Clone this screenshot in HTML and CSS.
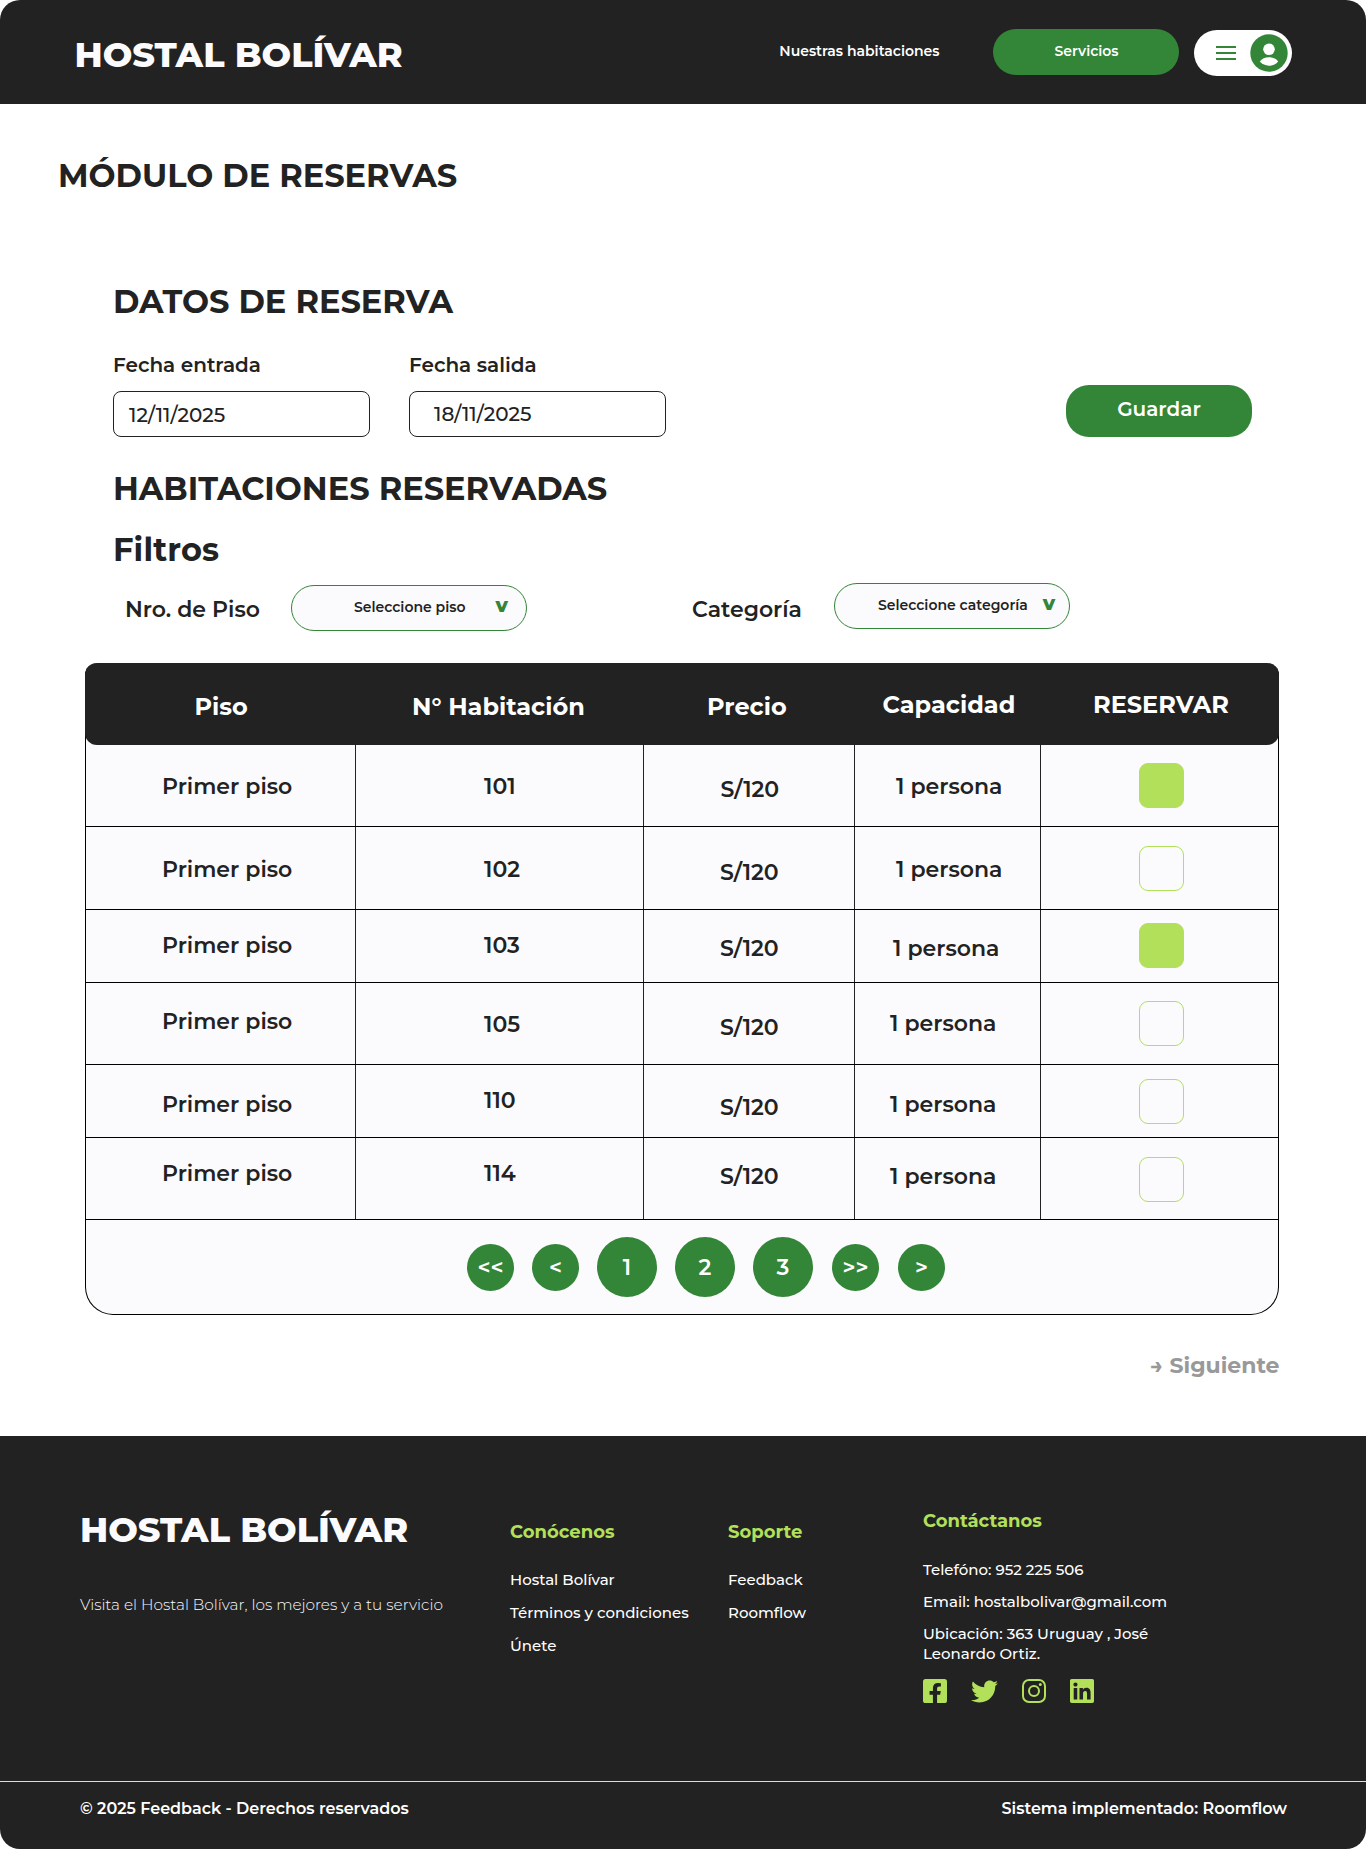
FILE: index.html
```html
<!DOCTYPE html>
<html lang="es">
<head>
<meta charset="utf-8">
<title>Hostal Bolívar - Módulo de reservas</title>
<link rel="stylesheet" href="styles.css">
</head>
<body>
<div class="page">
  <header class="topbar">
    <div class="brand">HOSTAL BOLÍVAR</div>
    <nav class="nav">
      <a class="nav-link">Nuestras habitaciones</a>
      <a class="nav-button">Servicios</a>
      <div class="user-menu">
        <svg class="burger" width="20" height="14" viewBox="0 0 20 14" fill="#338537"><path d="M0 0h20v2H0zM0 6h20v2H0zM0 12h20v2H0z"/></svg>
        <svg width="38" height="38" viewBox="0 0 38 38"><circle cx="19" cy="19" r="18.7" fill="#338537"/><circle cx="19" cy="15.3" r="5.8" fill="#fff"/><path d="M9.8 27.6c1.8-3 5.4-4.4 9.2-4.4s7.400 1.400 9.200 4.400c-2.300 2.800-5.600 4.100-9.200 4.100s-6.900-1.300-9.200-4.100z" fill="#fff"/></svg>
      </div>
    </nav>
  </header>

  <main>
    <h1 class="title">MÓDULO DE RESERVAS</h1>
    <section class="booking">
      <h2>DATOS DE RESERVA</h2>
      <div class="dates">
        <div class="field">
          <label>Fecha entrada</label>
          <div class="input input-in">12/11/2025</div>
        </div>
        <div class="field">
          <label>Fecha salida</label>
          <div class="input input-out">18/11/2025</div>
        </div>
        <button class="save">Guardar</button>
      </div>
      <h2 class="rooms-title">HABITACIONES RESERVADAS</h2>
      <h2 class="filters-title">Filtros</h2>
      <div class="filters">
        <span class="filter-label">Nro. de Piso</span>
        <div class="select select-floor"><span>Seleccione piso</span><b>v</b></div>
        <span class="filter-label filter-category">Categoría</span>
        <div class="select select-category"><span>Seleccione categoría</span><b>v</b></div>
      </div>
    </section>

    <section class="table">
      <div class="row head">
        <div>Piso</div><div>N° Habitación</div><div>Precio</div><div>Capacidad</div><div>RESERVAR</div>
      </div>
      <div class="row r1"><div>Primer piso</div><div>101</div><div>S/120</div><div>1 persona</div><div><i class="check on"></i></div></div>
      <div class="row r2"><div>Primer piso</div><div>102</div><div>S/120</div><div>1 persona</div><div><i class="check"></i></div></div>
      <div class="row r3"><div>Primer piso</div><div>103</div><div>S/120</div><div>1 persona</div><div><i class="check on"></i></div></div>
      <div class="row r4"><div>Primer piso</div><div>105</div><div>S/120</div><div>1 persona</div><div><i class="check"></i></div></div>
      <div class="row r5"><div>Primer piso</div><div>110</div><div>S/120</div><div>1 persona</div><div><i class="check"></i></div></div>
      <div class="row r6"><div>Primer piso</div><div>114</div><div>S/120</div><div>1 persona</div><div><i class="check"></i></div></div>
      <div class="pager">
        <a class="small">&lt;&lt;</a><a class="small">&lt;</a><a>1</a><a>2</a><a>3</a><a class="small forward">&gt;&gt;</a><a class="small forward">&gt;</a>
      </div>
    </section>
    <a class="next">→ Siguiente</a>
  </main>

  <footer>
    <div class="footer-main">
      <div class="about">
        <div class="brand">HOSTAL BOLÍVAR</div>
        <p class="tagline">Visita el Hostal Bolívar, los mejores y a tu servicio</p>
      </div>
      <div class="links">
        <h3>Conócenos</h3>
        <a>Hostal Bolívar</a><a>Términos y condiciones</a><a>Únete</a>
      </div>
      <div class="links">
        <h3>Soporte</h3>
        <a>Feedback</a><a>Roomflow</a>
      </div>
      <div class="contact">
        <h3>Contáctanos</h3>
        <p>Telefóno: 952 225 506</p>
        <p>Email: hostalbolivar@gmail.com</p>
        <p>Ubicación: 363 Uruguay , José<br>Leonardo Ortiz.</p>
        <div class="social">
          <svg width="24" height="24" viewBox="0 32 448 448" fill="#b2e05b"><path d="M400 32H48A48 48 0 0 0 0 80v352a48 48 0 0 0 48 48h137.250V327.690h-63V256h63v-54.640c0-62.150 37-96.480 93.670-96.480 27.140 0 55.520 4.840 55.520 4.840v61h-31.270c-30.810 0-40.420 19.120-40.420 38.730V256h68.780l-11 71.690h-57.780V480H400a48 48 0 0 0 48-48V80a48 48 0 0 0-48-48z"/></svg>
          <svg width="27" height="27" viewBox="0 0 512 512" fill="#b2e05b"><path d="M459.370 151.716c.325 4.548.325 9.097.325 13.645 0 138.720-105.583 298.558-298.558 298.558-59.452 0-114.680-17.219-161.137-47.106 8.447.974 16.568 1.299 25.340 1.299 49.055 0 94.213-16.568 130.274-44.832-46.132-.975-84.792-31.188-98.112-72.772 6.498.974 12.995 1.624 19.818 1.624 9.421 0 18.843-1.300 27.614-3.573-48.081-9.747-84.143-51.980-84.143-102.985v-1.299c13.969 7.797 30.214 12.670 47.431 13.319-28.264-18.843-46.781-51.005-46.781-87.391 0-19.492 5.197-37.360 14.294-52.954 51.655 63.675 129.300 105.258 216.365 109.807-1.624-7.797-2.599-15.918-2.599-24.040 0-57.828 46.782-104.934 104.934-104.934 30.213 0 57.502 12.670 76.670 33.137 23.715-4.548 46.456-13.320 66.599-25.340-7.798 24.366-24.366 44.833-46.132 57.827 21.117-2.273 41.584-8.122 60.426-16.243-14.292 20.791-32.161 39.308-52.628 54.253z"/></svg>
          <svg width="24" height="24" viewBox="0 0 24 24" fill="none" stroke="#b2e05b" stroke-width="2"><rect x="1" y="1" width="22" height="22" rx="6"/><circle cx="12" cy="12" r="5"/><circle cx="18.300" cy="5.600" r="1.500" fill="#b2e05b" stroke="none"/></svg>
          <svg width="24" height="24" viewBox="0 32 448 448" fill="#b2e05b"><path d="M416 32H31.900C14.300 32 0 46.500 0 64.300v383.400C0 465.500 14.300 480 31.900 480H416c17.600 0 32-14.500 32-32.300V64.300c0-17.800-14.400-32.300-32-32.300zM135.400 416H69V202.200h66.500V416zm-33.200-243c-21.300 0-38.500-17.300-38.500-38.500S80.900 96 102.200 96c21.200 0 38.500 17.300 38.500 38.500 0 21.300-17.200 38.500-38.500 38.500zm282.100 243h-66.400V312c0-24.800-.5-56.700-34.500-56.700-34.600 0-39.900 27-39.900 54.900V416h-66.400V202.200h63.700v29.200h.9c8.900-16.800 30.600-34.500 62.900-34.500 67.200 0 79.700 44.300 79.700 101.900V416z"/></svg>
        </div>
      </div>
    </div>
    <div class="footer-bottom">
      <span>© 2025 Feedback - Derechos reservados</span>
      <span>Sistema implementado: Roomflow</span>
    </div>
  </footer>
</div>
</body>
</html>
```
FILE: styles.css
```css
* { box-sizing: border-box; }
body, h1, h2, h3, p { margin: 0; }
body {
  background: #fff;
  color: #222;
  font-family: Montserrat, Inter, sans-serif;
  font-weight: 600;
}
.page { width: 1366px; border-radius: 20px; overflow: hidden; }

/* Top bar */
.topbar {
  display: flex;
  justify-content: space-between;
  align-items: flex-start;
  height: 104px;
  padding: 0 74px;
  background: #222;
}
.brand { font-size: 35px; line-height: 43px; font-weight: 800; color: #fbfbfd; }
.topbar .brand { margin: 33px 0 0 0.500px; }
.nav { display: flex; align-items: flex-start; font-size: 14px; line-height: 18px; color: #fff; }
.nav-link { margin: 42px 53.500px 0 0; }
.nav-button {
  width: 186px;
  height: 46px;
  margin: 29px 15px 0 0;
  padding: 13px 0 0 1px;
  border-radius: 23px;
  background: #338537;
  text-align: center;
}
.user-menu {
  display: flex;
  align-items: center;
  gap: 14px;
  width: 98px;
  height: 46px;
  margin-top: 30px;
  padding-left: 22px;
  border-radius: 23px;
  background: #fff;
}

/* Booking form */
.title { margin: 52px 0 0 58px; font-size: 32px; line-height: 39px; }
.booking { margin: 87px 114px 0 113px; }
h2 { font-size: 32px; line-height: 39px; }
.dates { display: flex; align-items: flex-end; gap: 39px; margin-top: 32px; font-size: 20px; line-height: 24px; }
.field { display: flex; flex-direction: column; gap: 14px; }
.input {
  width: 257px;
  height: 46px;
  border: 1px solid #222;
  border-radius: 8px;
  font-weight: 500;
}
.input-in { padding: 11px 0 0 15px; }
.input-out { padding: 10px 0 0 24px; }
.save {
  width: 186px;
  height: 52px;
  margin-left: auto;
  padding: 0 0 4px;
  border: 0;
  border-radius: 23px;
  background: #338537;
  color: #fff;
  font: inherit;
  font-weight: 600;
}
.rooms-title { margin-top: 32px; }
.filters-title { margin-top: 22px; letter-spacing: 0.150px; }
.filters { display: flex; align-items: flex-start; margin-top: 14px; }
.filter-label { width: 166px; margin: 13px 0 0 12px; font-size: 22px; line-height: 27px; }
.filter-category { width: 142px; margin-left: 165px; }
.select {
  display: flex;
  align-items: flex-start;
  width: 236px;
  height: 46px;
  border: 1px solid #338537;
  border-radius: 23px;
  background: #fbfbfd;
  font-size: 14px;
  line-height: 18px;
}
.select span { margin-top: 12px; }
.select b { margin-top: 7px; font-size: 20px; line-height: 24px; font-weight: 800; color: #338537; }
.select-floor { margin-top: 2px; padding-left: 62px; }
.select-floor b { margin-left: 30px; }
.select-category { padding-left: 43px; }
.select-category b { margin-left: 15px; }

/* Rooms table */
.table {
  width: 1194px;
  margin: 32px 0 0 85px;
  border: 1px solid #000;
  border-top: 0;
  border-radius: 12px 12px 28px 28px;
  background: #fbfbfd;
}
.row {
  display: grid;
  grid-template-columns: 270px 288px 211px 186px 237px;
  border-bottom: 1px solid #000;
  font-size: 22px;
  line-height: 27px;
}
.row > div { border-right: 1px solid #222; }
.row > div:nth-child(1) { padding-left: 76px; }
.row > div:nth-child(2) { padding-left: 128px; }
.row > div:nth-child(3) { padding-left: 76px; }
.row > div:nth-child(4) { padding-left: 35px; }
.row > div:nth-child(5) { padding-left: 98px; border-right: 0; }
.row.head {
  height: 82px;
  margin: 0 -1px;
  padding: 0 1px;
  border: 0;
  border-radius: 12px;
  background: #222;
  color: #fff;
  font-size: 24px;
  line-height: 29px;
  font-weight: 700;
}
.row.head > div { padding-top: 29px; border: 0; }
.row.head > div:nth-child(1) { padding-left: 108.500px; }
.row.head > div:nth-child(2) { padding-left: 56px; }
.row.head > div:nth-child(3) { padding-left: 63px; }
.row.head > div:nth-child(4) { padding-left: 27.500px; padding-top: 27px; }
.row.head > div:nth-child(5) { padding-left: 52px; padding-top: 27px; }

.r1 { height: 82px; }
.r1 > div { padding-top: 28px; }
.r1 > div:nth-child(3) { padding-top: 31px; padding-left: 76.500px; }
.r1 > div:nth-child(4), .r2 > div:nth-child(4) { padding-left: 41px; }
.r1 > div:nth-child(5) { padding-top: 18px; }
.r2 { height: 83px; }
.r2 > div { padding-top: 29px; }
.r2 > div:nth-child(3) { padding-top: 32px; }
.r2 > div:nth-child(5) { padding-top: 19px; }
.r3 { height: 73px; }
.r3 > div { padding-top: 22px; }
.r3 > div:nth-child(3) { padding-top: 25px; }
.r3 > div:nth-child(4) { padding-top: 25px; padding-left: 38px; }
.r3 > div:nth-child(5) { padding-top: 13px; }
.r4 { height: 82px; }
.r4 > div { padding-top: 25px; }
.r4 > div:nth-child(2) { padding-top: 28px; }
.r4 > div:nth-child(3) { padding-top: 31px; }
.r4 > div:nth-child(4) { padding-top: 27px; }
.r4 > div:nth-child(5) { padding-top: 18px; }
.r5 { height: 73px; }
.r5 > div { padding-top: 26px; }
.r5 > div:nth-child(2) { padding-top: 22px; }
.r5 > div:nth-child(3) { padding-top: 29px; }
.r5 > div:nth-child(5) { padding-top: 14px; }
.r6 { height: 82px; }
.r6 > div { padding-top: 22px; }
.r6 > div:nth-child(3), .r6 > div:nth-child(4) { padding-top: 25px; }
.r6 > div:nth-child(5) { padding-top: 19px; }

.check { display: block; width: 45px; height: 45px; border: 1px solid #b2e05b; border-radius: 9px; }
.check.on { background: #b2e05b; }

.pager {
  display: flex;
  align-items: center;
  gap: 18px;
  height: 94px;
  padding-left: 381px;
  color: #fff;
  font-size: 22px;
  line-height: 27px;
}
.pager a {
  display: grid;
  place-items: center;
  width: 60px;
  height: 60px;
  border-radius: 50%;
  background: #338537;
}
.pager .small { width: 47px; height: 47px; margin-top: 1px; }
.pager .forward { margin-left: 1px; }

.next {
  display: block;
  padding: 37px 86.500px 57px 0;
  text-align: right;
  font-size: 22px;
  line-height: 27px;
  font-weight: 700;
  color: #999;
}

/* Footer */
footer { background: #222; color: #fff; }
.footer-main {
  display: grid;
  grid-template-columns: 430px 218px 195px 1fr;
  height: 345px;
  padding-left: 80px;
  font-size: 15px;
  line-height: 19px;
  font-weight: 500;
}
.about { padding-top: 72px; }
.tagline { margin-top: 44px; font-weight: 300; font-size: 15.300px; color: #fbfbfd; }
h3 { font-size: 18px; line-height: 22px; font-weight: 700; color: #b2e05b; }
.links { display: flex; flex-direction: column; gap: 14px; padding-top: 85px; }
.links h3 { margin-bottom: 13px; }
.contact { display: flex; flex-direction: column; gap: 12px; padding-top: 74px; line-height: 20px; }
.contact h3 { margin-bottom: 16px; }
.social { display: flex; align-items: center; gap: 24px; margin-top: 3px; height: 24px; }
.footer-bottom {
  display: flex;
  justify-content: space-between;
  height: 68px;
  padding: 17px 79px 0 80px;
  border-top: 1px solid #ddd;
  font-size: 16px;
  line-height: 19px;
}
```
